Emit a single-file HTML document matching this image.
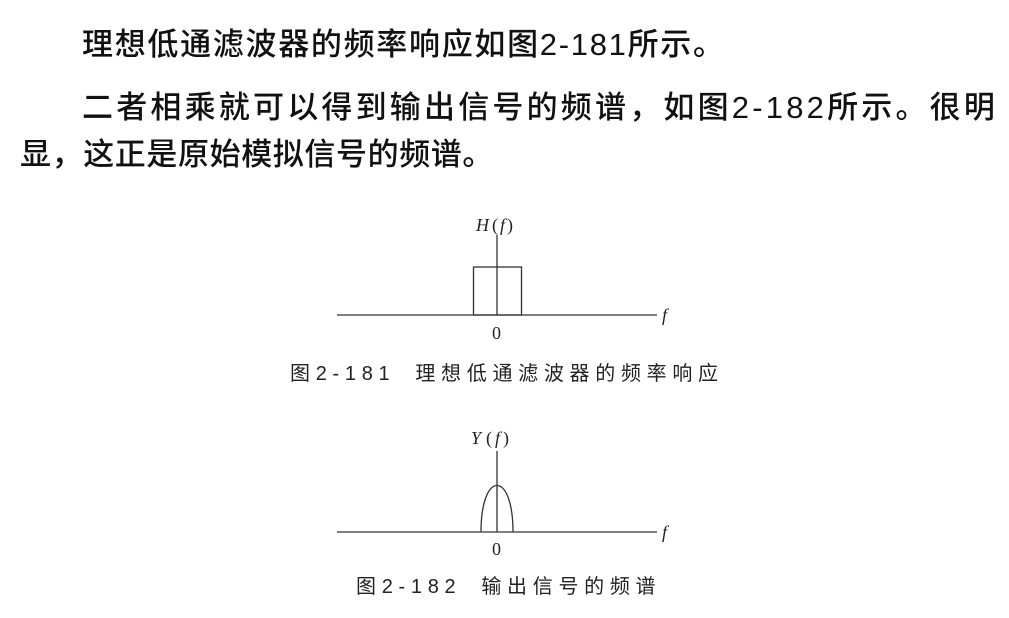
<!DOCTYPE html>
<html><head><meta charset="utf-8"><style>
body{margin:0;width:1009px;height:618px;background:#fff;position:relative;overflow:hidden;font-family:"Liberation Sans","Noto Sans CJK SC",sans-serif;color:#111}
.t{position:absolute;white-space:nowrap;font-size:31px;font-weight:500;line-height:1}
.c{position:absolute;white-space:nowrap;font-size:20px;color:#222;line-height:1;letter-spacing:5.7px}
svg{position:absolute;left:0;top:0}
</style></head><body>
<div class="t" style="left:82px;top:29px;letter-spacing:1.7px">理想低通滤波器的频率响应如图2-181所示。</div>
<div class="t" style="left:82px;top:92px;letter-spacing:3.2px">二者相乘就可以得到输出信号的频谱，如图2-182所示。很明</div>
<div class="t" style="left:20px;top:139px;letter-spacing:0.6px">显，这正是原始模拟信号的频谱。</div>
<div class="c" style="left:290px;top:364px">图2-181<span style="display:inline-block;width:20px"></span>理想低通滤波器的频率响应</div>
<div class="c" style="left:356px;top:577px">图2-182<span style="display:inline-block;width:20px"></span>输出信号的频谱</div>
<svg width="1009" height="618" fill="none" stroke="#333" stroke-width="1.3">
<line x1="337" y1="315" x2="657" y2="315"/>
<line x1="497" y1="235" x2="497" y2="315"/>
<rect x="473.5" y="267" width="48" height="48"/>
<line x1="337" y1="532" x2="657" y2="532"/>
<line x1="497" y1="451" x2="497" y2="532"/>
<path d="M481 532 C481 470 513 470 513 532"/>
<g fill="#222" stroke="none" font-family="Liberation Serif,serif" font-size="18">
<text x="476" y="231" font-style="italic">H</text><text x="492" y="231">(</text><text x="500" y="231" font-style="italic">f</text><text x="507" y="231">)</text>
<text x="662" y="321" font-style="italic">f</text>
<text x="492" y="339">0</text>
<text x="471" y="444" font-style="italic">Y</text><text x="486" y="444">(</text><text x="495" y="444" font-style="italic">f</text><text x="503" y="444">)</text>
<text x="662" y="538" font-style="italic">f</text>
<text x="492" y="555">0</text>
</g>
</svg>
</body></html>
